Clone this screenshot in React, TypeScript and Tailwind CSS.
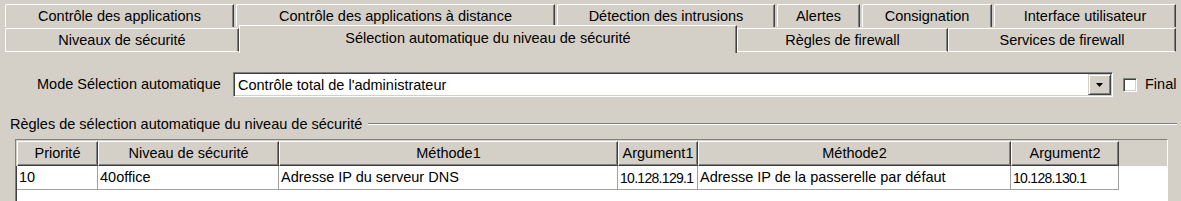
import type React from "react"

const row1 = [
  { label: "Contrôle des applications", w: "w-[229px]" },
  { label: "Contrôle des applications à distance", w: "w-[319px]" },
  { label: "Détection des intrusions", w: "w-[218px]" },
  { label: "Alertes", w: "w-[83px]" },
  { label: "Consignation", w: "w-[130px]" },
  { label: "Interface utilisateur", w: "w-[182px]" },
]

const columns = [
  { label: "Priorité", w: "w-[81px]", num: false },
  { label: "Niveau de sécurité", w: "w-[181px]", num: false },
  { label: "Méthode1", w: "w-[339px]", num: false },
  { label: "Argument1", w: "w-[80px]", num: true },
  { label: "Méthode2", w: "w-[313px]", num: false },
  { label: "Argument2", w: "w-[108px]", num: true },
]

const rows = [["10", "40office", "Adresse IP du serveur DNS", "10.128.129.1", "Adresse IP de la passerelle par défaut", "10.128.130.1"]]

function Tab({ children, className }: { children: React.ReactNode; className: string }) {
  return (
    <div
      className={`flex items-center justify-center border-t border-l border-t-white border-l-white border-r border-r-[#404040] shadow-[inset_-1px_0_0_#808080] rounded-tl-[2px] ${className}`}
    >
      {children}
    </div>
  )
}

export default function App() {
  return (
    <div className="w-[1181px] h-[201px] overflow-hidden bg-[#d4d0c8] text-[14.5px] text-black font-['Liberation_Sans',Arial,sans-serif] leading-none">
      {/* tab rows */}
      <div className="flex gap-[2px] pl-[5px] pt-[4px] h-[27px]">
        {row1.map((t) => (
          <Tab key={t.label} className={`${t.w} h-[23px] pt-[1px]`}>
            {t.label}
          </Tab>
        ))}
      </div>
      <div className="flex pl-[5px] pt-[1px] h-[25px] items-start">
        <Tab className="w-[234px] h-[24px] border-b border-b-white">Niveaux de sécurité</Tab>
        <div className="w-[498px] h-[28px] -mt-[3px] flex items-start justify-center pt-[5px] border-t border-l border-t-white border-l-white border-r border-r-[#404040] shadow-[inset_-1px_0_0_#808080] relative z-10 bg-[#d4d0c8]">
          Sélection automatique du niveau de sécurité
        </div>
        <Tab className="w-[211px] h-[24px] border-b border-b-white">Règles de firewall</Tab>
        <Tab className="w-[228px] h-[24px] border-b border-b-white">Services de firewall</Tab>
      </div>

      {/* mode row */}
      <div className="flex items-center h-[25px] mt-[20px]">
        <span className="ml-[37px] w-[196px] whitespace-nowrap">Mode Sélection automatique</span>
        <div className="w-[880px] h-[25px] flex items-center bg-white border-t border-l border-t-[#808080] border-l-[#808080] border-b border-r border-b-white border-r-white shadow-[inset_1px_1px_0_#404040,inset_-1px_-1px_0_#d4d0c8]">
          <span className="flex-1 pl-[4px] pt-[1px]">Contrôle total de l'administrateur</span>
          <div className="w-[23px] h-[21px] mr-[1px] flex items-center justify-center bg-[#d4d0c8] border-t border-l border-t-[#d4d0c8] border-l-[#d4d0c8] border-b border-r border-b-[#404040] border-r-[#404040] shadow-[inset_1px_1px_0_#fff,inset_-1px_-1px_0_#808080]">
            <svg width="7" height="4" viewBox="0 0 7 4">
              <path d="M0 0h7L3.5 4z" fill="#000" />
            </svg>
          </div>
        </div>
        <div className="ml-[10px] w-[14px] h-[14px] bg-white border-t border-l border-t-[#808080] border-l-[#808080] border-b border-r border-b-white border-r-white shadow-[inset_1px_1px_0_#404040,inset_-1px_-1px_0_#d4d0c8]" />
        <span className="ml-[8px]">Final</span>
      </div>

      {/* group title */}
      <div className="flex items-center h-[16px] mt-[19px] pl-[10px] pr-[4px]">
        <span className="pr-[6px] whitespace-nowrap">Règles de sélection automatique du niveau de sécurité</span>
        <div className="flex-1 h-[2px] border-t border-t-[#808080] border-b border-b-white" />
      </div>

      {/* table */}
      <div className="ml-[15px] mt-[7px] w-[1153px] h-[70px] bg-white border-t border-l border-t-[#808080] border-l-[#808080] border-r border-r-white shadow-[inset_1px_1px_0_#404040]">
        <div className="flex pl-[1px] pt-[1px] bg-[#d4d0c8]">
          {columns.map((c) => (
            <div
              key={c.label}
              className={`${c.w} h-[25px] flex items-center justify-center whitespace-nowrap border-t border-l border-t-white border-l-white border-r border-b border-r-[#404040] border-b-[#404040] shadow-[inset_-1px_-1px_0_#808080]`}
            >
              {c.label}
            </div>
          ))}
        </div>
        {rows.map((r) => (
          <div key={r[0]} className="flex pl-[1px]">
            {r.map((cell, i) => (
              <div
                key={i}
                className={`${columns[i].w} h-[24px] flex items-center pl-[2px] whitespace-nowrap overflow-hidden border-r border-b border-[#a0a0a0] ${columns[i].num ? "text-[14px] tracking-[-0.7px]" : ""}`}
              >
                {cell}
              </div>
            ))}
          </div>
        ))}
      </div>
    </div>
  )
}
